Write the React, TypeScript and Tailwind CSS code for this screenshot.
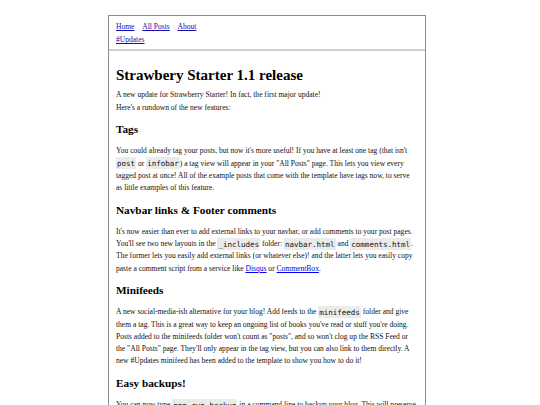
import * as React from "react";

function Code({ children }: { children: React.ReactNode }) {
  return (
    <code className="font-['DejaVu_Sans_Mono',monospace] text-[7.5px] bg-[#ebebeb] px-[1px] py-[1.5px] rounded-[1px] text-[#111]">
      {children}
    </code>
  );
}

function A({ children }: { children: React.ReactNode }) {
  return (
    <a href="#" className="text-[#0000ee] underline">
      {children}
    </a>
  );
}

function H2({ children }: { children: React.ReactNode }) {
  return <h2 className="text-[11.25px] leading-[14px] font-bold mt-[8.5px] mb-[9px] text-black">{children}</h2>;
}

function P({ children, className = "" }: { children: React.ReactNode; className?: string }) {
  return <p className={"text-[7.55px] leading-[12.25px] text-[#111] " + className}>{children}</p>;
}

export default function App() {
  return (
    <div className="min-h-[405px] bg-white font-['Liberation_Serif',serif] pt-[15px]">
      <div className="ml-[108px] w-[318px] min-h-[390px] border border-b-0 border-[#8c8c8c]">
        {/* header */}
        <header className="px-[7px] pt-[4px] pb-[2.5px] border-b-2 border-[#cfcfcf] text-[7.55px] leading-[13.4px]">
          <nav className="flex gap-[7.8px]">
            <a href="#" className="text-[#1a0dab] underline">Home</a>
            <a href="#" className="text-[#1a0dab] underline">All Posts</a>
            <a href="#" className="text-[#1a0dab] underline">About</a>
          </nav>
          <div>
            <a href="#" className="text-[#1a0dab] underline">#Updates</a>
          </div>
        </header>

        <main className="px-[7px] pt-[14.5px]">
          <h1 className="text-[15px] leading-[18px] font-bold mb-[5.5px] text-black">Strawbery Starter 1.1 release</h1>
          <P>
            A new update for Strawberry Starter! In fact, the first major update!
            <br />
            Here's a rundown of the new features:
          </P>

          <H2>Tags</H2>
          <P className="pr-[5px]">
            You could already tag your posts, but now it's more useful! If you have at least one tag (that isn't{" "}
            <Code>post</Code> or <Code>infobar</Code>) a tag view will appear in your "All Posts" page. This lets you
            view every tagged post at once! All of the example posts that come with the template have tags now, to
            serve as little examples of this feature.
          </P>

          <H2>Navbar links &amp; Footer comments</H2>
          <P>
            It's now easier than ever to add external links to your navbar, or add comments to your post pages.
            You'll see two new layouts in the <Code>_includes</Code> folder: <Code>navbar.html</Code> and{" "}
            <Code>comments.html</Code>. The former lets you easily add external links (or whatever else)! and the
            latter lets you easily copy paste a comment script from a service like <A>Disqus</A> or{" "}
            <A>CommentBox</A>.
          </P>

          <H2>Minifeeds</H2>
          <P>
            A new social-media-ish alternative for your blog! Add feeds to the <Code>minifeeds</Code> folder and give
            them a tag. This is a great way to keep an ongoing list of books you've read or stuff you're doing. Posts
            added to the minifeeds folder won't count as "posts", and so won't clog up the RSS Feed or the "All Posts"
            page. They'll only appear in the tag view, but you can also link to them directly. A new #Updates minifeed
            has been added to the template to show you how to do it!
          </P>

          <H2>Easy backups!</H2>
          <P>
            You can now type <Code>npm run backup</Code> in a command line to backup your blog. This will preserve
            all of your posts, minifeeds and custom files in a single folder.
          </P>
        </main>
      </div>
    </div>
  );
}
